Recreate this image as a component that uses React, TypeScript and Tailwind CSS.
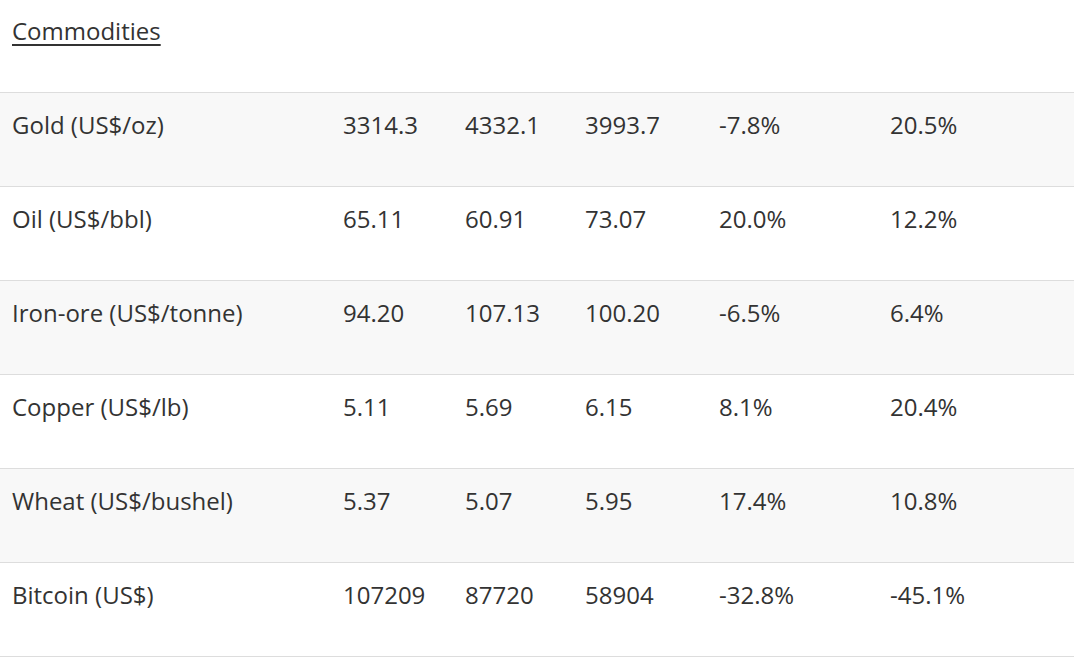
import React from "react";

const rows = [
  ["Gold (US$/oz)", "3314.3", "4332.1", "3993.7", "-7.8%", "20.5%"],
  ["Oil (US$/bbl)", "65.11", "60.91", "73.07", "20.0%", "12.2%"],
  ["Iron-ore (US$/tonne)", "94.20", "107.13", "100.20", "-6.5%", "6.4%"],
  ["Copper (US$/lb)", "5.11", "5.69", "6.15", "8.1%", "20.4%"],
  ["Wheat (US$/bushel)", "5.37", "5.07", "5.95", "17.4%", "10.8%"],
  ["Bitcoin (US$)", "107209", "87720", "58904", "-32.8%", "-45.1%"],
];

export default function App() {
  return (
    <div
      className="w-[1076px] h-[662px] bg-white text-[#333333] overflow-hidden"
      style={{ fontFamily: "'Open Sans', Lato, sans-serif" }}
    >
      <div className="h-[92px] pl-[12px] pt-[14px]">
        <span className="text-[24px] leading-[34px] underline underline-offset-[4px] decoration-[2px]">
          Commodities
        </span>
      </div>
      <div className="w-[1074px] border-b border-[#dddddd]">
        {rows.map((r, i) => (
          <div
            key={i}
            className={`grid grid-cols-[331px_122px_120px_134px_171px_196px] h-[94px] border-t border-[#dddddd] text-[24px] leading-[36px] ${
              i % 2 === 0 ? "bg-[#f8f8f8]" : "bg-white"
            }`}
          >
            {r.map((c, j) => (
              <div key={j} className="pl-[12px] pt-[14px] whitespace-nowrap">
                {c}
              </div>
            ))}
          </div>
        ))}
      </div>
    </div>
  );
}
